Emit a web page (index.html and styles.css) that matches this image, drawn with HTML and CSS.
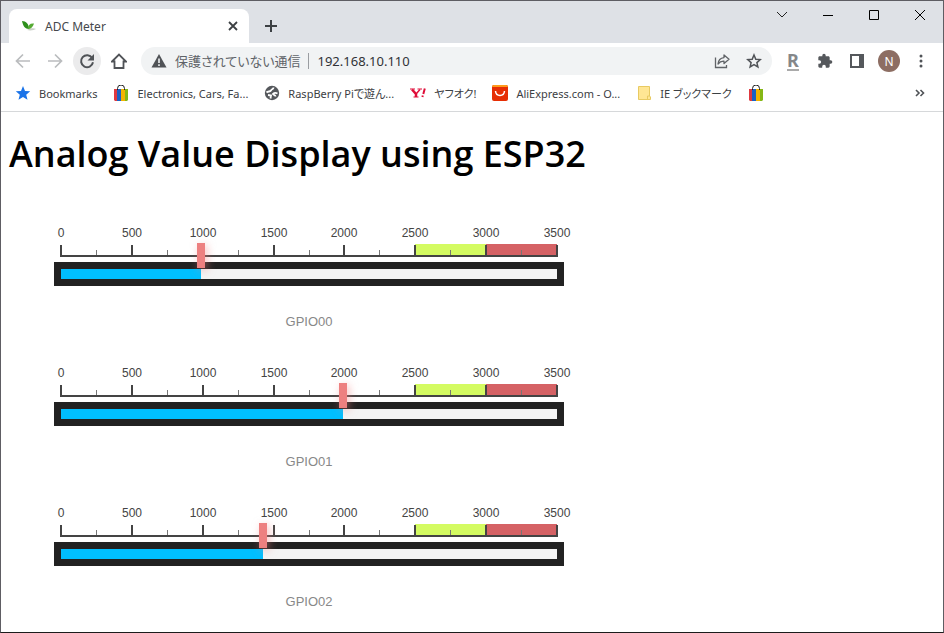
FILE: index.html
```html
<!DOCTYPE html>
<html lang="ja">
<head>
<meta charset="utf-8">
<title>ADC Meter</title>
<link rel="stylesheet" href="styles.css">
</head>
<body>
<div class="window">
  <header class="tabstrip">
    <div class="tab">
      <svg class="favicon" width="16" height="16" viewBox="0 0 16 16" aria-hidden="true"><path d="M6 12c3-2 7-2 9-1-2 1-5 2-9 1z" fill="#c9cfc6"/><path d="M1 3c4 0 7 3 7 8-4 0-6-3-7-8z" fill="#2e8f1c"/><path d="M7 11c0-4 2-6 6-5.500-1 3.500-3 5.500-6 5.500z" fill="#55aa33"/></svg>
      <span class="tab-title">ADC Meter</span>
      <button class="tab-close" aria-label="タブを閉じる"><svg width="10" height="10" viewBox="0 0 10 10"><path d="M1 1l8 8M9 1l-8 8" stroke="#3c4043" stroke-width="1.8"/></svg></button>
    </div>
    <button class="new-tab" aria-label="新しいタブ"><svg width="12" height="12" viewBox="0 0 12 12"><path d="M6 0v12M0 6h12" stroke="#3c4043" stroke-width="2"/></svg></button>
    <div class="caption">
      <button aria-label="タブを検索"><svg width="12" height="12" viewBox="0 0 12 12"><path d="M1 3l5 5 5-5" fill="none" stroke="#222"/></svg></button>
      <button aria-label="最小化"><svg width="12" height="12" viewBox="0 0 12 12"><path d="M1 6.500h10" stroke="#000"/></svg></button>
      <button aria-label="最大化"><svg width="12" height="12" viewBox="0 0 12 12"><path d="M1.500 1.500h9v9h-9z" fill="none" stroke="#000"/></svg></button>
      <button aria-label="閉じる"><svg width="12" height="12" viewBox="0 0 12 12"><path d="M1 1l10 10M11 1L1 11" stroke="#000"/></svg></button>
    </div>
  </header>

  <nav class="toolbar">
    <button class="tool" aria-label="戻る"><svg width="16" height="16" viewBox="0 0 16 16"><path d="M15 8H2M8 1.500L1.500 8 8 14.500" fill="none" stroke="#babcbe" stroke-width="1.700"/></svg></button>
    <button class="tool" aria-label="進む"><svg width="16" height="16" viewBox="0 0 16 16"><path d="M1 8h13M8 1.500L14.500 8 8 14.500" fill="none" stroke="#babcbe" stroke-width="1.700"/></svg></button>
    <button class="tool tool-active" aria-label="再読み込み"><svg width="16" height="16" viewBox="0 0 16 16"><path d="M13.200 5A6 6 0 1 0 14 9.300" fill="none" stroke="#505357" stroke-width="2"/><path d="M15 1v6.500H8.500z" fill="#505357"/></svg></button>
    <button class="tool" aria-label="ホーム"><svg width="16" height="16" viewBox="0 0 16 16"><path d="M1 8.500L8 1.500l7 7h-2.500V15h-9V8.500z" fill="none" stroke="#505357" stroke-width="1.800"/></svg></button>
    <div class="omnibox">
      <svg width="16" height="16" viewBox="0 0 16 16" aria-hidden="true"><path d="M8 1l7.500 13.500H.5z" fill="#505357"/><path d="M8 5.500v4.500M8 11.200V13" stroke="#f1f3f4" stroke-width="1.600"/></svg>
      <label class="security" for="address">保護されていない通信</label>
      <input class="address" id="address" type="text" value="192.168.10.110">
      <button class="omni-button" aria-label="共有"><svg width="16" height="16" viewBox="0 0 16 16"><path d="M1.500 4.500v10h11V12" fill="none" stroke="#606367" stroke-width="1.300"/><path d="M10 2l5 4.300-5 4.300V8.200C7.500 8 5.500 9 4 11c.3-3.500 2.300-6 6-6.400z" fill="none" stroke="#606367" stroke-width="1.300" stroke-linejoin="round"/></svg></button>
      <button class="omni-button" aria-label="ブックマークに追加"><svg width="16" height="16" viewBox="0 0 16 16"><path d="M8 2l1.800 4.200 4.500.4-3.400 3 1 4.400L8 11.700 4.100 14l1-4.400-3.400-3 4.500-.4z" fill="none" stroke="#505357" stroke-width="1.500"/></svg></button>
    </div>
    <div class="extensions">
      <button class="rakuten" aria-label="Rakuten"><span>R</span></button>
      <button aria-label="拡張機能"><svg width="16" height="16" viewBox="0 0 24 24"><path d="M20.500 11H19V7c0-1.100-.9-2-2-2h-4V3.500a2.500 2.500 0 0 0-5 0V5H4c-1.100 0-2 .9-2 2v3.800h1.500a2.700 2.700 0 0 1 0 5.400H2V20c0 1.100.9 2 2 2h3.800v-1.500a2.700 2.700 0 0 1 5.400 0V22H17c1.100 0 2-.9 2-2v-4h1.500a2.500 2.500 0 0 0 0-5z" fill="#55585c"/></svg></button>
      <button aria-label="サイドパネル"><svg width="14" height="14" viewBox="0 0 14 14"><path d="M0 0h14v14H0zM2 2v10h7V2z" fill="#55585c" fill-rule="evenodd"/></svg></button>
      <button class="avatar" aria-label="プロフィール">N</button>
      <button aria-label="メニュー"><svg width="16" height="16" viewBox="0 0 16 16"><g fill="#505357"><circle cx="8" cy="3" r="1.500"/><circle cx="8" cy="8" r="1.500"/><circle cx="8" cy="13" r="1.500"/></g></svg></button>
    </div>
  </nav>

  <nav class="bookmarks">
    <a href="#"><svg width="16" height="16" viewBox="0 0 16 16"><path d="M8 1l2 4.900 5.200.4-4 3.400 1.300 5.100L8 12l-4.500 2.800 1.300-5.100-4-3.400L6 5.900z" fill="#1a73e8"/></svg>Bookmarks</a>
    <a href="#"><svg width="16" height="16" viewBox="0 0 16 16"><path d="M1 4h4v12H2L1 15z" fill="#df3940"/><path d="M4 4h4v12H4z" fill="#1b61c4"/><path d="M8 4h4v12H8z" fill="#f4b400"/><path d="M12 4h3v11l-1 1h-2z" fill="#85b716"/><path d="M4.500 5V3.500a3.500 3.500 0 0 1 7 0V5" fill="none" stroke="#222"/></svg>Electronics, Cars, Fa...</a>
    <a href="#"><svg width="16" height="16" viewBox="0 0 16 16"><circle cx="8" cy="8" r="7.200" fill="#55585c"/><path d="M9.500 2.500c0 2-2 1.500-2.500 3C6 7 4 6 2.500 7.500M4 10l3 .5-.5 3M13.500 8.500c-2-1-3.500-.5-4.500.5 1 1.500 2.500 1 2.500 2.500" fill="none" stroke="#fff" stroke-width="1.800"/></svg>RaspBerry Piで遊ん...</a>
    <a href="#"><svg width="16" height="16" viewBox="0 0 16 16"><g fill="none" stroke="#df0d38"><path d="M2 4.500L6 9v3" stroke-width="2.500"/><path d="M6 9l4-4.500" stroke-width="1.400"/><path d="M0 4h5M7.500 4H12M3.500 12H8.500" stroke-width="1.200"/><path d="M14.800 3.500l-1.500 5.500M12.800 10.500l-.4 1.500" stroke-width="2"/></g></svg>ヤフオク!</a>
    <a href="#"><svg width="16" height="16" viewBox="0 0 16 16"><rect width="16" height="16" rx="2" fill="#e62e04"/><path d="M0 2a2 2 0 0 1 2-2h12a2 2 0 0 1 2 2z" fill="#ff9b1a"/><path d="M3.500 6c.5 6 8.500 6 9 0" fill="none" stroke="#fff" stroke-width="1.500"/></svg>AliExpress.com - O...</a>
    <a href="#"><svg width="16" height="16" viewBox="0 0 16 16"><path d="M2.500 1.500h11V11l1 1v2.500h-12z" fill="#ffe694" stroke="#e8ca62"/><path d="M11.500 14v-3h2" fill="none" stroke="#e8ca62"/></svg>IE ブックマーク</a>
    <a href="#" aria-label="eBay"><svg width="16" height="16" viewBox="0 0 16 16"><path d="M1 4h4v12H2L1 15z" fill="#df3940"/><path d="M4 4h4v12H4z" fill="#1b61c4"/><path d="M8 4h4v12H8z" fill="#f4b400"/><path d="M12 4h3v11l-1 1h-2z" fill="#85b716"/><path d="M4.500 5V3.500a3.500 3.500 0 0 1 7 0V5" fill="none" stroke="#222"/></svg></a>
    <button class="overflow" aria-label="他のブックマーク"><svg width="10" height="8" viewBox="0 0 10 8"><path d="M1 1l3 3-3 3M5.500 1l3 3-3 3" fill="none" stroke="#505357" stroke-width="1.600"/></svg></button>
  </nav>

  <main class="page">
    <h1>Analog Value Display using ESP32</h1>
    <div class="meters">
      <svg class="meter" viewBox="0 0 600 140" role="img" aria-label="GPIO00">
        <rect class="zone-high" x="406" y="52" width="71" height="12"/><rect class="zone-max" x="477" y="52" width="71" height="12"/>
        <path class="minor" d="M87.500 58v5M158.500 58v5M229.500 58v5M300.500 58v5M370.500 58v5M441.500 58v5M512.500 58v5"/>
        <path class="major" d="M52 53v11h496V53M123 53v11M194 53v11M265 53v11M335 53v11M406 53v11M477 53v11"/>
        <g class="numbers"><text x="52" y="45">0</text><text x="123" y="45">500</text><text x="194" y="45">1000</text><text x="265" y="45">1500</text><text x="335" y="45">2000</text><text x="406" y="45">2500</text><text x="477" y="45">3000</text><text x="548" y="45">3500</text></g>
        <rect class="frame" x="45" y="70" width="510" height="24"/><rect class="track" x="52" y="77" width="496" height="10"/>
        <rect class="value" x="52" y="77" width="140" height="10"/><rect class="needle" x="188" y="51" width="8" height="25"/>
        <text class="name" x="300" y="134">GPIO00</text>
      </svg>
      <svg class="meter" viewBox="0 0 600 140" role="img" aria-label="GPIO01">
        <rect class="zone-high" x="406" y="52" width="71" height="12"/><rect class="zone-max" x="477" y="52" width="71" height="12"/>
        <path class="minor" d="M87.500 58v5M158.500 58v5M229.500 58v5M300.500 58v5M370.500 58v5M441.500 58v5M512.500 58v5"/>
        <path class="major" d="M52 53v11h496V53M123 53v11M194 53v11M265 53v11M335 53v11M406 53v11M477 53v11"/>
        <g class="numbers"><text x="52" y="45">0</text><text x="123" y="45">500</text><text x="194" y="45">1000</text><text x="265" y="45">1500</text><text x="335" y="45">2000</text><text x="406" y="45">2500</text><text x="477" y="45">3000</text><text x="548" y="45">3500</text></g>
        <rect class="frame" x="45" y="70" width="510" height="24"/><rect class="track" x="52" y="77" width="496" height="10"/>
        <rect class="value" x="52" y="77" width="282" height="10"/><rect class="needle" x="330" y="51" width="8" height="25"/>
        <text class="name" x="300" y="134">GPIO01</text>
      </svg>
      <svg class="meter" viewBox="0 0 600 140" role="img" aria-label="GPIO02">
        <rect class="zone-high" x="406" y="52" width="71" height="12"/><rect class="zone-max" x="477" y="52" width="71" height="12"/>
        <path class="minor" d="M87.500 58v5M158.500 58v5M229.500 58v5M300.500 58v5M370.500 58v5M441.500 58v5M512.500 58v5"/>
        <path class="major" d="M52 53v11h496V53M123 53v11M194 53v11M265 53v11M335 53v11M406 53v11M477 53v11"/>
        <g class="numbers"><text x="52" y="45">0</text><text x="123" y="45">500</text><text x="194" y="45">1000</text><text x="265" y="45">1500</text><text x="335" y="45">2000</text><text x="406" y="45">2500</text><text x="477" y="45">3000</text><text x="548" y="45">3500</text></g>
        <rect class="frame" x="45" y="70" width="510" height="24"/><rect class="track" x="52" y="77" width="496" height="10"/>
        <rect class="value" x="52" y="77" width="202" height="10"/><rect class="needle" x="250" y="51" width="8" height="25"/>
        <text class="name" x="300" y="134">GPIO02</text>
      </svg>
    </div>
  </main>
</div>
</body>
</html>
```
FILE: styles.css
```css
* { box-sizing: border-box; }
body { margin: 0; background: #fff; font-family: "Noto Sans", "Noto Sans CJK JP", sans-serif; font-feature-settings: "palt"; }
button { border: 0; padding: 0; background: none; display: flex; align-items: center; justify-content: center; font: inherit; }
svg { flex: none; display: block; }
.window { min-height: 100vh; border: 1px solid #5e5d63; border-bottom-color: #1c1c1c; }

.tabstrip { display: flex; height: 42px; padding-left: 8px; background: #dee1e6; }
.tab { display: flex; align-items: center; gap: 8px; width: 240px; margin-top: 8px; padding: 0 10px 0 12px; background: #fff; border-radius: 8px 8px 0 0; font-size: 12px; color: #45484c; }
.tab-title { flex: 1; }
.tab-close { width: 12px; height: 16px; }
.new-tab { width: 28px; height: 28px; margin: 11px 0 0 8px; }
.caption { display: flex; margin-left: auto; }
.caption button { width: 46px; height: 28px; }

.toolbar { display: flex; align-items: center; height: 36px; padding: 0 14px 0 8px; }
.tool { width: 28px; height: 28px; margin-right: 4px; border-radius: 14px; }
.tool-active { background: #ebebec; }
.omnibox { display: flex; align-items: center; flex: 1; height: 28px; margin-left: 4px; padding: 0 10px; border-radius: 14px; background: #f1f3f4; font-size: 13px; }
.security { margin-left: 8px; padding-right: 8px; border-right: 1px solid #9a9da1; line-height: 16px; color: #5f6368; font-family: "Noto Sans CJK JP", sans-serif; }
.address { flex: 1; min-width: 0; margin-left: 8px; padding: 0; border: 0; background: none; font: inherit; color: #303236; outline: 0; }
.omni-button { width: 16px; height: 28px; margin-left: 16px; }
.extensions { display: flex; align-items: center; gap: 16px; margin-left: 13px; }
.extensions button { min-width: 16px; height: 24px; }
.rakuten span { font: bold 18px/17px "Noto Sans", sans-serif; color: #85878a; border-bottom: 2px solid #aaa; }
.extensions .avatar { width: 22px; height: 22px; margin: 0 -3px; border-radius: 11px; background: #8d6e63; color: #fff; font-size: 12px; }

.bookmarks { display: flex; align-items: center; gap: 16px; height: 33px; padding: 0 18px 4px 14px; border-bottom: 1px solid #d6d8da; font-size: 11px; color: #3c4043; }
.bookmarks a { display: flex; align-items: center; gap: 8px; color: inherit; text-decoration: none; white-space: nowrap; }
.overflow { width: 10px; height: 16px; margin-left: auto; }

.page { padding: 20px 8px 0; }
h1 { margin: 0 0 16px; font: 600 36px/44px "Open Sans", "Noto Sans", sans-serif; color: #000; }
.meter { width: 100%; max-width: 600px; }
.meter text { font-family: "Liberation Sans", Arial, sans-serif; text-anchor: middle; }
.numbers { font-size: 12px; fill: #444; }
.name { font-size: 13px; fill: #888; }
.minor { stroke: #777; }
.major { fill: none; stroke: #444; stroke-width: 2; }
.zone-high { fill: #d4fb62; }
.zone-max { fill: #d56265; }
.frame { fill: #222; }
.track { fill: #f4f4f4; }
.value { fill: #00bfff; }
.needle { fill: #ed8080; filter: drop-shadow(2px 2px 4px rgba(240, 128, 128, .5)); }
```
